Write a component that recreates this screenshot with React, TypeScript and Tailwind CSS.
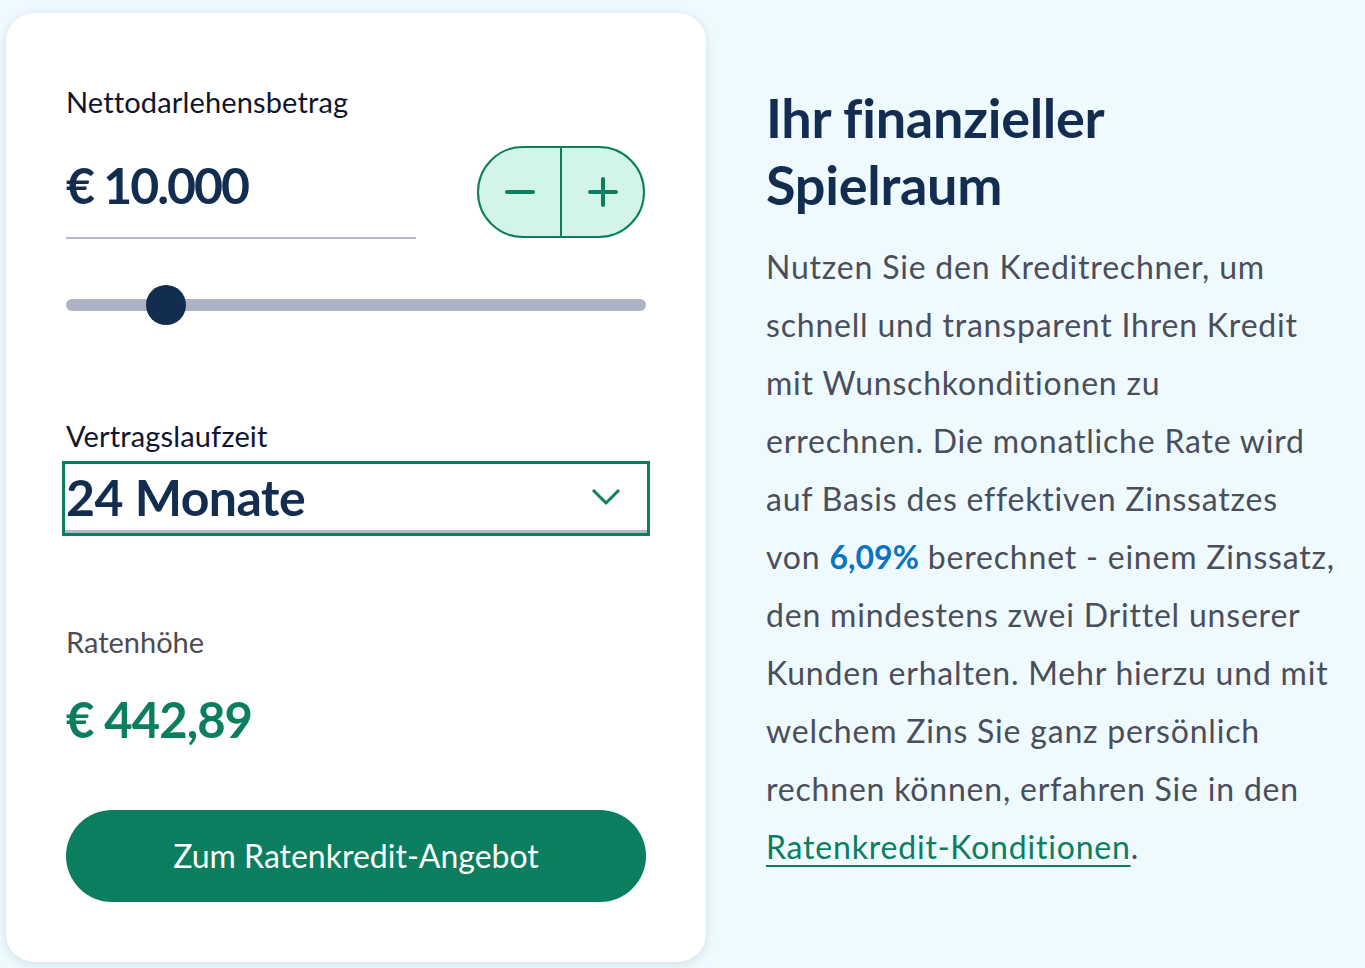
import React, { useState } from 'react';

const font = { fontFamily: 'Lato, "Noto Sans", sans-serif' };

const MIN = 1000;
const MAX = 53000;

export default function App() {
  const [amount, setAmount] = useState(10000);
  const pct = ((amount - MIN) / (MAX - MIN)) * 100;

  const fmt = (n: number) => n.toLocaleString('de-DE');

  return (
    <div className="min-h-[968px] w-full bg-[#effaff] flex items-start [font-variant-ligatures:none]" style={font}>
      {/* Rechner-Karte */}
      <div className="ml-[6px] mt-[13px] w-[700px] h-[949px] bg-white rounded-[28px] shadow-[0_2px_10px_rgba(60,90,110,0.18)] px-[60px] pt-[71px] flex flex-col">
        <label className="text-[29px] leading-[36px] text-[#0f1530] tracking-[0.005em]">Nettodarlehensbetrag</label>

        <div className="mt-[29px] flex items-start justify-between">
          <div className="w-[350px] border-b-2 border-[#b3b8c6] pb-[20px] pt-[4px]">
            <span className="text-[50px] leading-[64px] font-bold text-[#132d50] tracking-[-0.04em]">€ {fmt(amount)}</span>
          </div>
          <div className="mt-[-3px] mr-[1px] flex w-[168px] h-[92px] rounded-full border-2 border-[#0a7e5e] bg-[#d2f5e8] overflow-hidden">
            <button
              className="flex-1 flex items-center justify-center border-r-2 border-[#0a7e5e]"
              onClick={() => setAmount(Math.max(MIN, amount - 500))}
              aria-label="weniger"
            >
              <svg width="30" height="30" viewBox="0 0 30 30">
                <path d="M2 15h26" stroke="#0a7e5e" strokeWidth="4" strokeLinecap="round" />
              </svg>
            </button>
            <button
              className="flex-1 flex items-center justify-center"
              onClick={() => setAmount(Math.min(MAX, amount + 500))}
              aria-label="mehr"
            >
              <svg width="30" height="30" viewBox="0 0 30 30">
                <path d="M2 15h26M15 2v26" stroke="#0a7e5e" strokeWidth="4" strokeLinecap="round" />
              </svg>
            </button>
          </div>
        </div>

        {/* Slider */}
        <div className="relative mt-[60px] h-[12px] rounded-full bg-[#aeb3c4]">
          <div
            className="absolute top-1/2 w-[40px] h-[40px] -translate-x-1/2 -translate-y-1/2 rounded-full bg-[#132d50]"
            style={{ left: `${pct}%` }}
          />
        </div>

        <label className="mt-[107px] text-[29px] leading-[36px] text-[#0f1530] tracking-[0.005em]">Vertragslaufzeit</label>
        <div className="mt-[7px] -mx-[4px] h-[75px] border-[3px] border-[#0a7e5e] flex">
          <div className="flex-1 flex items-center justify-between border-b-[3px] border-[#b3b8c6] pl-[1px] pr-[26px]">
            <span className="text-[50px] leading-none font-bold text-[#132d50] tracking-[-0.01em]">24 Monate</span>
            <svg width="30" height="18" viewBox="0 0 30 18">
              <path d="M2 2l13 13L28 2" stroke="#0a7e5e" strokeWidth="3" fill="none" />
            </svg>
          </div>
        </div>

        <div className="mt-[88px] text-[29px] leading-[36px] text-[#4a4c57]">Ratenhöhe</div>
        <div className="mt-[29px] text-[49px] leading-[60px] font-bold text-[#0a7e5e] tracking-[-0.02em]">€ 442,89</div>

        <button className="mt-[61px] h-[92px] w-full rounded-full bg-[#0a7e5e] text-white text-[32px]">
          Zum Ratenkredit-Angebot
        </button>
      </div>

      {/* Text rechts */}
      <div className="ml-[60px] mt-[84px] w-[595px]">
        <h2 className="text-[54px] leading-[67px] font-bold text-[#132d50] tracking-[-0.005em]">
          Ihr finanzieller
          <br />
          Spielraum
        </h2>
        <p className="mt-[20px] text-[32px] leading-[58px] text-[#4a4e5b] tracking-[0.025em] whitespace-nowrap">
          Nutzen Sie den Kreditrechner, um
          <br />
          schnell und transparent Ihren Kredit
          <br />
          mit Wunschkonditionen zu
          <br />
          errechnen. Die monatliche Rate wird
          <br />
          auf Basis des effektiven Zinssatzes
          <br />
          von <span className="font-bold text-[#0a73c2] tracking-normal">6,09%</span> berechnet - einem Zinssatz,
          <br />
          den mindestens zwei Drittel unserer
          <br />
          Kunden erhalten. Mehr hierzu und mit
          <br />
          welchem Zins Sie ganz persönlich
          <br />
          rechnen können, erfahren Sie in den
          <br />
          <a href="#" className="text-[#0a7e5e] underline underline-offset-[6px] decoration-2">
            Ratenkredit-Konditionen
          </a>
          .
        </p>
      </div>
    </div>
  );
}
